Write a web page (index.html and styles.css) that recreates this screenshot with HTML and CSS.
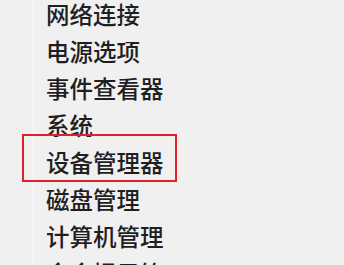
FILE: index.html
```html
<!DOCTYPE html>
<html lang="zh-CN">
<head>
    <meta charset="UTF-8">
    <title>菜单</title>
    <link rel="stylesheet" href="styles.css">
</head>
<body>
    <div class="menu">
        <ul class="menu-list">
            <li>网络连接</li>
            <li>电源选项</li>
            <li>事件查看器</li>
            <li>系统</li>
            <li class="marked">设备管理器</li>
            <li>磁盘管理</li>
            <li>计算机管理</li>
            <li>命令提示符</li>
        </ul>
    </div>
</body>
</html>
```

FILE: styles.css
```css
:root {
    --bg-color: #f0f0f0;
    --text-color: #1f1f1f;
    --line-color: #fbfbfb;
    --mark-color: #e0202a;
}

body {
    margin: 0;
    padding: 0;
    background-color: var(--bg-color);
    color: var(--text-color);
    font-family: "Noto Sans CJK SC", "Noto Sans", sans-serif;
    overflow: hidden;
}

.menu {
    padding-left: 33px;
}

.menu-list {
    list-style: none;
    margin: 0;
    padding: 0 0 0 12px;
    border-left: 1px solid var(--line-color);
}

.menu-list li {
    position: relative;
    height: 28px;
    line-height: 28px;
    padding-bottom: 9px;
    font-size: 23.5px;
    font-weight: 500;
    white-space: nowrap;
}

.marked::after {
    content: "";
    position: absolute;
    left: -24px;
    top: -14px;
    width: 151px;
    height: 44px;
    border: 2px solid var(--mark-color);
}
```
